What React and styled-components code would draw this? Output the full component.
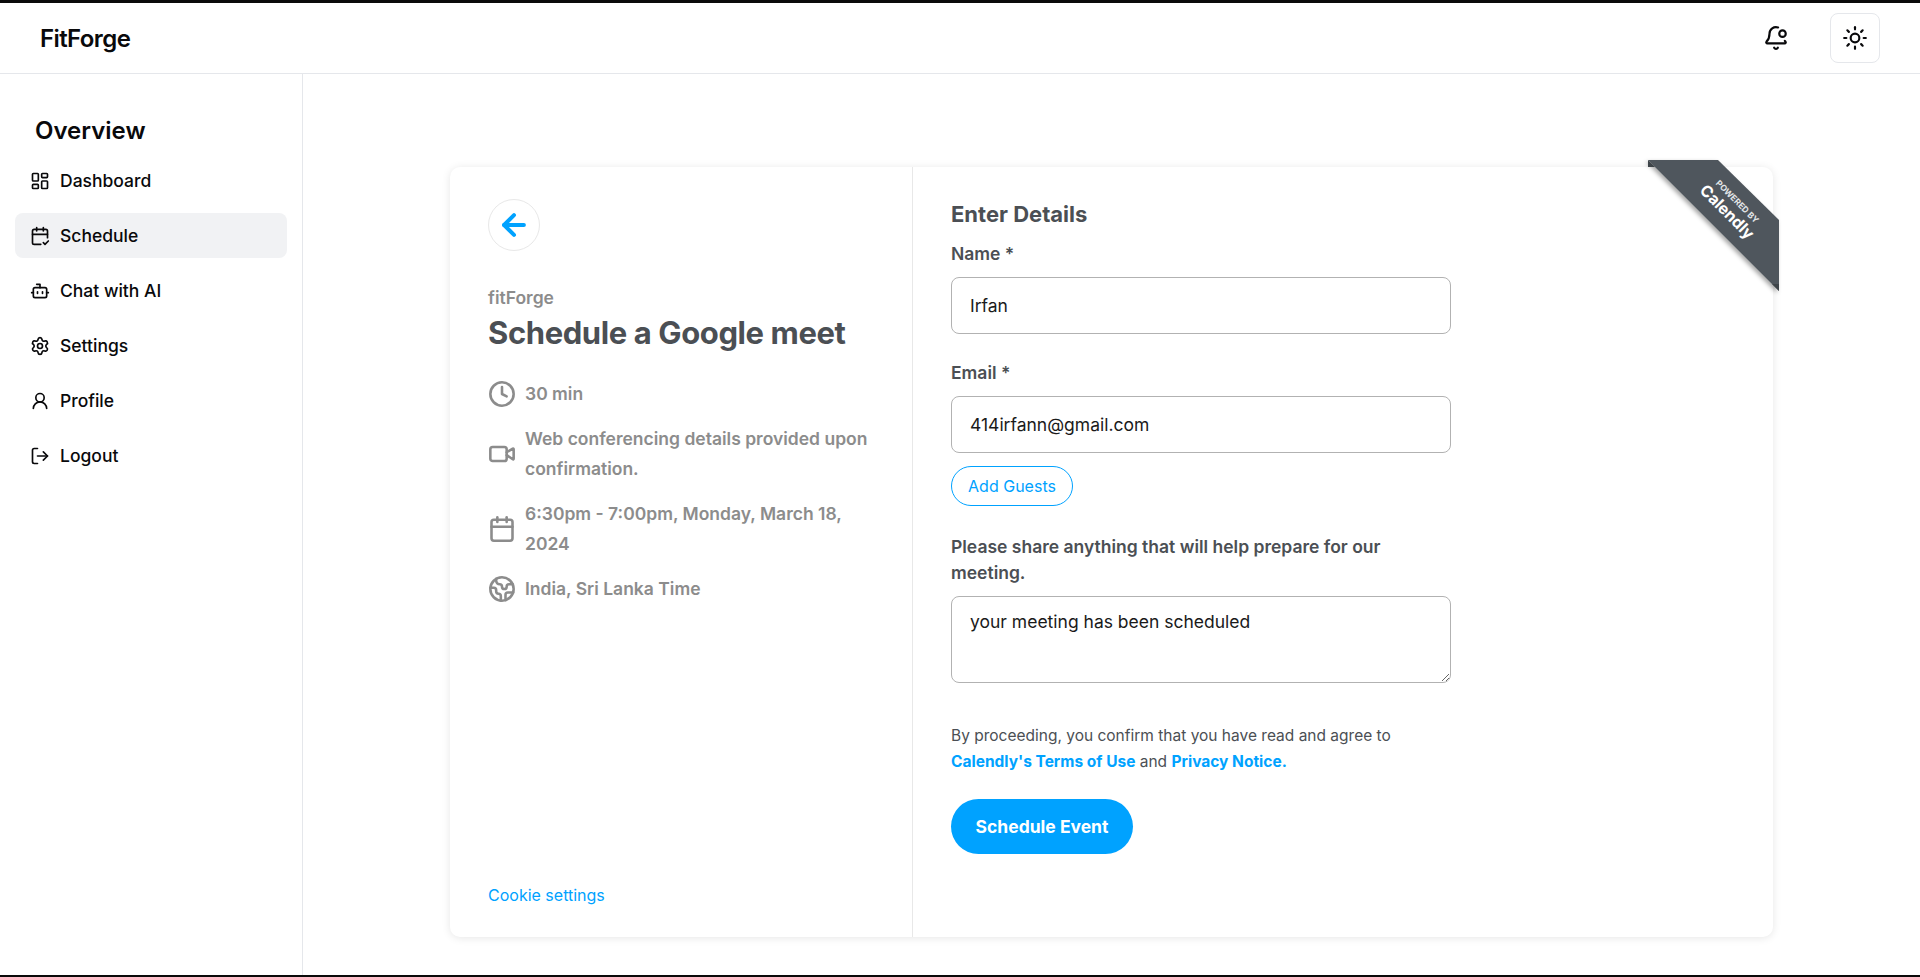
import React from "react";
import styled, { createGlobalStyle } from "styled-components";
import {
  LayoutDashboard,
  CalendarCheck2,
  Bot,
  Settings,
  UserRound,
  LogOut,
  BellDot,
  Sun,
  ArrowLeft,
  Clock,
  Video,
  Calendar,
  Earth,
} from "lucide-react";

const Global = createGlobalStyle`
  html, body { margin: 0; padding: 0; background: #fff; }
  * { box-sizing: border-box; }
`;

const Page = styled.div`
  height: 977px;
  display: flex;
  flex-direction: column;
  border-top: 3px solid #0a0a0a;
  border-bottom: 2px solid #0a0a0a;
  font-family: Inter, "Liberation Sans", sans-serif;
  color: #09090b;
  overflow: hidden;
`;
const Header = styled.header`
  height: 71px;
  flex: none;
  display: flex;
  align-items: center;
  justify-content: space-between;
  padding: 0 40px;
  border-bottom: 1px solid #e5e7eb;
`;
const Brand = styled.div`
  font-size: 24px;
  font-weight: 600;
  letter-spacing: -0.6px;
`;
const HeaderActions = styled.div`
  display: flex;
  align-items: center;
  gap: 30px;
`;
const BellButton = styled.div`
  width: 48px;
  height: 48px;
  display: flex;
  align-items: center;
  justify-content: center;
`;
const ThemeButton = styled.div`
  width: 50px;
  height: 50px;
  display: flex;
  align-items: center;
  justify-content: center;
  border: 1px solid #e5e7eb;
  border-radius: 8px;
`;
const Body = styled.div`
  flex: 1;
  display: flex;
  min-height: 0;
`;
const Sidebar = styled.aside`
  width: 303px;
  flex: none;
  border-right: 1px solid #e5e7eb;
  padding: 41px 15px 0;
`;
const SidebarTitle = styled.h2`
  margin: 0 0 11px;
  padding-left: 20px;
  font-size: 24px;
  line-height: 32px;
  font-weight: 600;
`;
const Nav = styled.nav`
  display: flex;
  flex-direction: column;
  gap: 10px;
`;
const NavItem = styled.div`
  height: 45px;
  display: flex;
  align-items: center;
  gap: 10px;
  padding: 0 15px 0 15px;
  border-radius: 8px;
  font-size: 17.5px;
  font-weight: 500;
  background: ${(p) => (p.$active ? "#f1f2f4" : "transparent")};
`;
const Main = styled.main`
  flex: 1;
  padding: 93px 147px 38px;
  display: flex;
`;
const Card = styled.section`
  position: relative;
  flex: 1;
  display: flex;
  border-radius: 10px;
  background: #fff;
  box-shadow: 0 1px 8px rgba(0, 0, 0, 0.1);
`;
const LeftCol = styled.div`
  width: 463px;
  flex: none;
  display: flex;
  flex-direction: column;
  padding: 32px 24px 30px 38px;
  border-right: 1px solid #e8e8e8;
`;
const BackButton = styled.div`
  width: 52px;
  height: 52px;
  border-radius: 50%;
  border: 1px solid #e8e8e8;
  display: flex;
  align-items: center;
  justify-content: center;
  color: #00a2ff;
  margin-bottom: 34px;
`;
const Org = styled.div`
  font-size: 17.5px;
  line-height: 26px;
  font-weight: 600;
  color: #8c8c8c;
`;
const Title = styled.h1`
  margin: 0 0 24px;
  font-size: 31px;
  line-height: 44px;
  font-weight: 700;
  letter-spacing: -0.4px;
  color: #4b4f54;
`;
const Details = styled.div`
  display: flex;
  flex-direction: column;
  gap: 15px;
`;
const Detail = styled.div`
  display: flex;
  align-items: center;
  gap: 9px;
  color: #8c8c8c;
  font-size: 17.5px;
  line-height: 30px;
  font-weight: 600;
  svg { flex: none; }
`;
const Cookie = styled.a`
  margin-top: auto;
  color: #00a2ff;
  font-size: 16px;
  line-height: 24px;
`;
const RightCol = styled.div`
  flex: 1;
  padding: 31px 38px;
`;
const FormTitle = styled.h2`
  margin: 0 0 11px;
  font-size: 22px;
  line-height: 32px;
  font-weight: 700;
  color: #4b4f54;
`;
const Label = styled.label`
  display: block;
  width: 500px;
  margin-bottom: 10px;
  font-size: 17.5px;
  line-height: 26px;
  font-weight: 600;
  color: #4b4f54;
`;
const Input = styled.input`
  display: block;
  width: 500px;
  height: 57px;
  padding: 0 18px;
  border: 1px solid #b2b2b2;
  border-radius: 8px;
  font: 400 17.5px Inter, "Liberation Sans", sans-serif;
  color: #1a1a1a;
  margin-bottom: ${(p) => p.$gap}px;
  outline: none;
`;
const GuestButton = styled.div`
  width: 122px;
  height: 40px;
  display: flex;
  align-items: center;
  justify-content: center;
  border: 1px solid #00a2ff;
  border-radius: 20px;
  color: #00a2ff;
  font-size: 16px;
  margin-bottom: 28px;
`;
const Textarea = styled.textarea`
  display: block;
  width: 500px;
  height: 87px;
  padding: 12px 18px;
  border: 1px solid #b2b2b2;
  border-radius: 8px;
  font: 400 17.5px/26px Inter, "Liberation Sans", sans-serif;
  color: #1a1a1a;
  outline: none;
  margin-bottom: 40px;
`;
const Terms = styled.p`
  width: 480px;
  margin: 0 0 25px;
  font-size: 15.5px;
  line-height: 25.5px;
  color: #4b4f54;
`;
const TermsLink = styled.a`
  color: #00a2ff;
  font-weight: 700;
`;
const Submit = styled.div`
  width: 182px;
  height: 55px;
  display: flex;
  align-items: center;
  justify-content: center;
  background: #00a2ff;
  color: #fff;
  border-radius: 28px;
  font-size: 17.5px;
  font-weight: 700;
`;
const Ribbon = styled.div`
  position: absolute;
  top: -7px;
  right: -6px;
  width: 131px;
  height: 131px;
`;
const RibbonShape = styled.svg`
  display: block;
  overflow: visible;
`;
const RibbonText = styled.div`
  position: absolute;
  left: 83px;
  top: 48px;
  width: 100px;
  margin-left: -50px;
  margin-top: -20px;
  height: 40px;
  display: flex;
  flex-direction: column;
  align-items: center;
  justify-content: center;
  transform: rotate(45deg);
  color: #fff;
`;
const RibbonSmall = styled.span`
  font-size: 8.5px;
  line-height: 10px;
  font-weight: 700;
  color: #e2e5e8;
`;
const RibbonBrand = styled.span`
  font-size: 16px;
  line-height: 18px;
  font-weight: 700;
`;

const navItems = [
  ["Dashboard", LayoutDashboard],
  ["Schedule", CalendarCheck2, true],
  ["Chat with AI", Bot],
  ["Settings", Settings],
  ["Profile", UserRound],
  ["Logout", LogOut],
];

export default function App() {
  return (
    <Page>
      <Global />
      <Header>
        <Brand>FitForge</Brand>
        <HeaderActions>
          <BellButton><BellDot size={26} strokeWidth={2} /></BellButton>
          <ThemeButton><Sun size={26} strokeWidth={2} /></ThemeButton>
        </HeaderActions>
      </Header>
      <Body>
        <Sidebar>
          <SidebarTitle>Overview</SidebarTitle>
          <Nav>
            {navItems.map(([label, Icon, active]) => (
              <NavItem key={label} $active={active}>
                <Icon size={20} strokeWidth={2} />
                {label}
              </NavItem>
            ))}
          </Nav>
        </Sidebar>
        <Main>
          <Card>
            <LeftCol>
              <BackButton><ArrowLeft size={34} strokeWidth={2.8} /></BackButton>
              <Org>fitForge</Org>
              <Title>Schedule a Google meet</Title>
              <Details>
                <Detail><Clock size={28} strokeWidth={2.2} />30 min</Detail>
                <Detail><Video size={28} strokeWidth={2.2} />Web conferencing details provided upon confirmation.</Detail>
                <Detail><Calendar size={28} strokeWidth={2.2} />6:30pm - 7:00pm, Monday, March 18, 2024</Detail>
                <Detail><Earth size={28} strokeWidth={2.2} />India, Sri Lanka Time</Detail>
              </Details>
              <Cookie>Cookie settings</Cookie>
            </LeftCol>
            <RightCol>
              <FormTitle>Enter Details</FormTitle>
              <Label>Name *</Label>
              <Input defaultValue="Irfan" $gap={26} />
              <Label>Email *</Label>
              <Input defaultValue="414irfann@gmail.com" $gap={13} />
              <GuestButton>Add Guests</GuestButton>
              <Label>Please share anything that will help prepare for our meeting.</Label>
              <Textarea defaultValue="your meeting has been scheduled" />
              <Terms>
                By proceeding, you confirm that you have read and agree to{" "}
                <TermsLink>Calendly's Terms of Use</TermsLink> and <TermsLink>Privacy Notice.</TermsLink>
              </Terms>
              <Submit>Schedule Event</Submit>
            </RightCol>
            <Ribbon>
              <RibbonShape width="131" height="131" viewBox="0 0 131 131">
                <defs>
                  <filter id="rs" x="-20%" y="-20%" width="140%" height="140%">
                    <feDropShadow dx="-2" dy="2" stdDeviation="2" floodOpacity="0.35" />
                  </filter>
                </defs>
                <polygon points="0,0 70,0 131,60 131,131 124,124 7,7" fill="#50575d" filter="url(#rs)" />
                <polygon points="0,0 7,7 0,7" fill="#3e4449" />
                <polygon points="124,124 131,124 131,131" fill="#3e4449" />
              </RibbonShape>
              <RibbonText>
                <RibbonSmall>POWERED BY</RibbonSmall>
                <RibbonBrand>Calendly</RibbonBrand>
              </RibbonText>
            </Ribbon>
          </Card>
        </Main>
      </Body>
    </Page>
  );
}
